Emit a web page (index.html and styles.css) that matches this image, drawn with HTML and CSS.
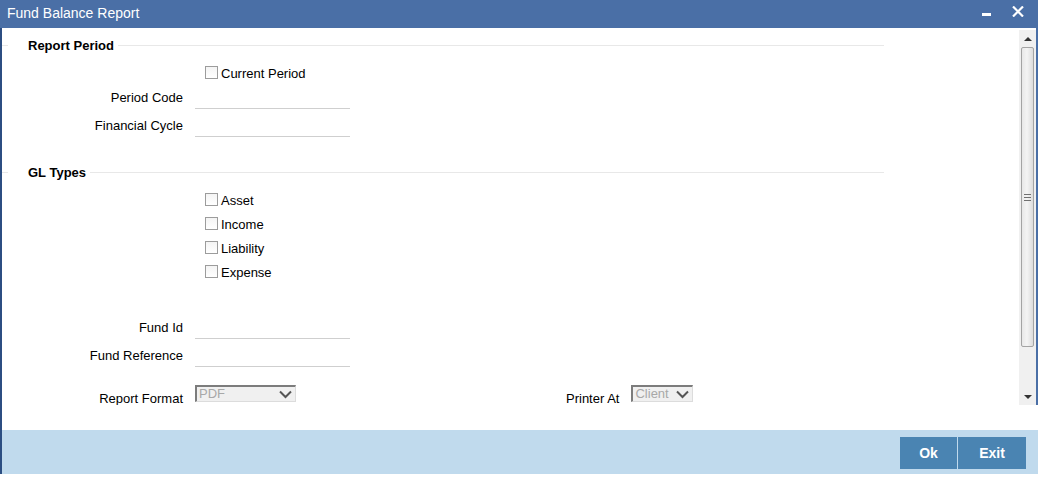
FILE: index.html
```html
<!DOCTYPE html>
<html lang="en">
<head>
    <meta charset="UTF-8">
    <title>Fund Balance Report</title>
    <link rel="stylesheet" href="styles.css">
</head>
<body>
    <div class="window">
        <div class="title-bar">
            <span class="title">Fund Balance Report</span>
            <div class="window-controls">
                <span class="btn-min"></span>
                <svg class="btn-close" width="12" height="11" viewBox="0 0 12 11">
                    <path d="M1 0.5 L11 10.5 M11 0.5 L1 10.5" stroke="#fff" stroke-width="2.2"/>
                </svg>
            </div>
        </div>
        <div class="main">
            <div class="content">
                <div class="section-head"><span>Report Period</span></div>
                <div class="check-row first">
                    <span class="checkbox"></span><span>Current Period</span>
                </div>
                <div class="field tight">
                    <label>Period Code</label>
                    <span class="text-input"></span>
                </div>
                <div class="field">
                    <label>Financial Cycle</label>
                    <span class="text-input"></span>
                </div>

                <div class="section-head gl"><span>GL Types</span></div>
                <div class="check-row first">
                    <span class="checkbox"></span><span>Asset</span>
                </div>
                <div class="check-row">
                    <span class="checkbox"></span><span>Income</span>
                </div>
                <div class="check-row">
                    <span class="checkbox"></span><span>Liability</span>
                </div>
                <div class="check-row">
                    <span class="checkbox"></span><span>Expense</span>
                </div>

                <div class="field fund">
                    <label>Fund Id</label>
                    <span class="text-input"></span>
                </div>
                <div class="field">
                    <label>Fund Reference</label>
                    <span class="text-input"></span>
                </div>

                <div class="field format-row">
                    <label>Report Format</label>
                    <span class="select wide">
                        <span>PDF</span>
                        <svg width="13" height="9" viewBox="0 0 13 9"><path d="M1 1.5 L6.5 7 L12 1.5" fill="none" stroke="#555" stroke-width="2"/></svg>
                    </span>
                    <label class="printer-label">Printer At</label>
                    <span class="select narrow">
                        <span>Client</span>
                        <svg width="13" height="9" viewBox="0 0 13 9"><path d="M1 1.5 L6.5 7 L12 1.5" fill="none" stroke="#555" stroke-width="2"/></svg>
                    </span>
                </div>
            </div>
            <div class="scrollbar">
                <div class="arrow up"></div>
                <div class="thumb"><span class="grip"></span></div>
                <div class="track"></div>
                <div class="arrow down"></div>
            </div>
        </div>
        <div class="spacer"></div>
        <div class="footer">
            <button class="footer-btn">Ok</button>
            <button class="footer-btn exit">Exit</button>
        </div>
    </div>
</body>
</html>
```

FILE: styles.css
```css
body {
    margin: 0;
    background-color: #ffffff;
    font-family: "Liberation Sans", Arial, sans-serif;
    font-size: 13px;
    color: #000;
}

.window {
    width: 1038px;
    height: 474px;
    display: flex;
    flex-direction: column;
}

.title-bar {
    height: 28px;
    background-color: #4a6fa6;
    display: flex;
    align-items: center;
    justify-content: space-between;
    color: #fff;
    flex-shrink: 0;
}

.title {
    font-size: 14px;
    margin-left: 7px;
    margin-top: -2px;
}

.window-controls {
    display: flex;
    align-items: center;
    margin-right: 14px;
    margin-top: -5px;
}

.btn-min {
    width: 9px;
    height: 3px;
    background-color: #fff;
    margin-top: 6px;
    margin-right: 21px;
}

.btn-close {
    display: block;
}

.main {
    height: 377px;
    display: flex;
    border-left: 2px solid #2c4e82;
    border-right: 2px solid #4a6fa6;
    flex-shrink: 0;
}

.content {
    flex: 1;
    overflow: hidden;
}

.section-head {
    display: flex;
    align-items: center;
    width: 882px;
    height: 20px;
    margin-top: 7px;
    font-weight: bold;
}

.section-head::before {
    content: "";
    width: 6px;
    border-top: 1px solid #e8e8e8;
}

.section-head span {
    margin-left: 20px;
    margin-right: 4px;
}

.section-head::after {
    content: "";
    flex: 1;
    border-top: 1px solid #e8e8e8;
}

.section-head.gl {
    margin-top: 23px;
}

.check-row {
    height: 24px;
    display: flex;
    align-items: center;
    padding-left: 203px;
}

.check-row.first {
    margin-top: 6px;
}

.checkbox {
    width: 11px;
    height: 11px;
    border: 1px solid #9c9c9c;
    background: linear-gradient(#f4f4f4, #ffffff);
    margin-right: 3px;
    margin-top: -1px;
}

.field {
    height: 28px;
    display: flex;
    align-items: center;
}

.field.tight {
    margin-top: -2px;
}

.field.fund {
    margin-top: 29px;
}

.field.format-row {
    margin-top: 14px;
    align-items: flex-start;
}

.field label {
    width: 181px;
    text-align: right;
    margin-right: 12px;
}

.format-row label {
    margin-top: 8px;
}

.text-input {
    width: 155px;
    height: 22px;
    border-bottom: 1px solid #cfcfcf;
    margin-top: 1px;
}

.select {
    height: 17px;
    display: flex;
    align-items: center;
    justify-content: space-between;
    box-sizing: border-box;
    border-top: 2px solid #7c7c7c;
    border-left: 2px solid #7c7c7c;
    border-right: 1px solid #dcdcdc;
    border-bottom: 1px solid #dcdcdc;
    background-color: #f0f0f0;
    color: #a8a8a8;
    padding: 0 3px 0 2px;
    margin-top: 2px;
    line-height: 14px;
}

.select.wide {
    width: 101px;
}

.select.narrow {
    width: 62px;
}

.field .printer-label {
    width: auto;
    margin-left: 270px;
}

.scrollbar {
    width: 17px;
    height: 375px;
    margin-top: 2px;
    background-color: #f0f0f0;
    display: flex;
    flex-direction: column;
    align-items: center;
}

.arrow {
    height: 17px;
    width: 17px;
    display: flex;
    align-items: center;
    justify-content: center;
}

.arrow::after {
    content: "";
    border-left: 4px solid transparent;
    border-right: 4px solid transparent;
}

.arrow.up::after {
    border-bottom: 4px solid #333;
}

.arrow.down::after {
    border-top: 4px solid #333;
}

.thumb {
    width: 13px;
    height: 300px;
    box-sizing: border-box;
    border: 1px solid #a4a4a4;
    border-radius: 2px;
    background: linear-gradient(to right, #e8e8e8, #f4f4f4 45%, #dcdcdc);
    display: flex;
    align-items: center;
    justify-content: center;
}

.grip {
    width: 7px;
    height: 5px;
    border-top: 1px solid #707070;
    border-bottom: 1px solid #707070;
    position: relative;
}

.grip::after {
    content: "";
    position: absolute;
    left: 0;
    right: 0;
    top: 2px;
    border-top: 1px solid #707070;
}

.track {
    flex: 1;
}

.spacer {
    height: 25px;
    border-left: 2px solid #2c4e82;
    flex-shrink: 0;
}

.footer {
    height: 44px;
    background-color: #c0daed;
    border-left: 2px solid #2c4e82;
    display: flex;
    align-items: center;
    justify-content: flex-end;
    padding-right: 12px;
    flex-shrink: 0;
}

.footer-btn {
    height: 32px;
    width: 57px;
    border: none;
    background-color: #4a84b2;
    color: #fff;
    font-family: "Liberation Sans", Arial, sans-serif;
    font-size: 14px;
    font-weight: bold;
    padding: 0;
    margin-top: 1px;
}

.footer-btn.exit {
    width: 68px;
    margin-left: 1px;
}
```
